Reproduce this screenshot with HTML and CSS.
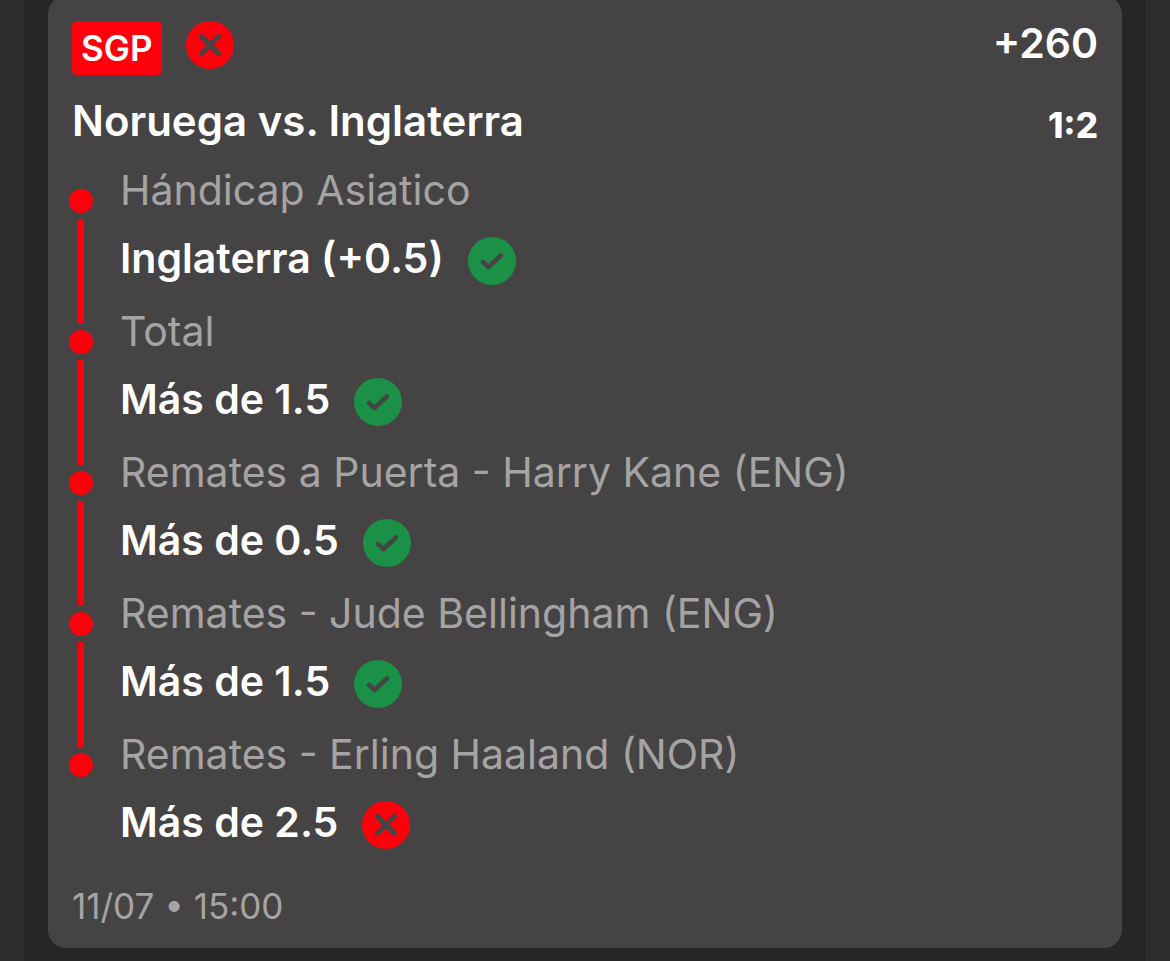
FILE: index.html
```
<!DOCTYPE html>
<html lang="es">
<head>
    <meta charset="UTF-8">
    <meta name="viewport" content="width=device-width, initial-scale=1.0">
    <title>Noruega vs. Inglaterra</title>
    <link rel="stylesheet" href="styles.css">
</head>
<body>
    <svg class="sprite" aria-hidden="true">
        <symbol id="icon-won" viewBox="0 0 48 48">
            <circle cx="24" cy="24" r="24" fill="#1a9147"/>
            <path d="M15 25l5.500 5L33 18.500" fill="none" stroke="#454344" stroke-width="4.500" stroke-linecap="round" stroke-linejoin="round"/>
        </symbol>
        <symbol id="icon-lost" viewBox="0 0 48 48">
            <circle cx="24" cy="24" r="24" fill="#fe000b"/>
            <path d="M15.500 15.500l17 17M32.500 15.500l-17 17" fill="none" stroke="#454344" stroke-width="5" stroke-linecap="round"/>
        </symbol>
    </svg>

    <main class="panel">
        <article class="bet-card">
            <header class="bet-header">
                <span class="tag">SGP</span>
                <svg class="status"><use href="#icon-lost"/></svg>
                <span class="odds">+260</span>
            </header>

            <div class="match">
                <h1 class="teams">Noruega vs. Inglaterra</h1>
                <span class="score">1:2</span>
            </div>

            <ul class="legs">
                <li class="leg">
                    <div class="market">Hándicap Asiatico</div>
                    <div class="pick"><span>Inglaterra (+0.5)</span><svg class="status"><use href="#icon-won"/></svg></div>
                </li>
                <li class="leg">
                    <div class="market">Total</div>
                    <div class="pick"><span>Más de 1.5</span><svg class="status"><use href="#icon-won"/></svg></div>
                </li>
                <li class="leg">
                    <div class="market">Remates a Puerta - Harry Kane (ENG)</div>
                    <div class="pick"><span>Más de 0.5</span><svg class="status"><use href="#icon-won"/></svg></div>
                </li>
                <li class="leg">
                    <div class="market">Remates - Jude Bellingham (ENG)</div>
                    <div class="pick"><span>Más de 1.5</span><svg class="status"><use href="#icon-won"/></svg></div>
                </li>
                <li class="leg">
                    <div class="market">Remates - Erling Haaland (NOR)</div>
                    <div class="pick"><span>Más de 2.5</span><svg class="status"><use href="#icon-lost"/></svg></div>
                </li>
            </ul>

            <footer class="date">11/07 • 15:00</footer>
        </article>
    </main>
</body>
</html>
```
FILE: styles.css
```
* {
    box-sizing: border-box;
}
body {
    margin: 0;
    min-height: 100vh;
    display: flex;
    background: #2c2c2c;
    color: #fff;
    font-family: Inter, Roboto, sans-serif;
    font-size: 41px;
    overflow: hidden;
}
.sprite {
    display: none;
}
.panel {
    flex: 1;
    margin: 0 24px;
    padding: 0 24px;
    background: #262626;
}
.bet-card {
    margin-top: -4px;
    padding: 25px 24px 18px;
    border-radius: 18px;
    background: #454344;
}
.bet-header {
    display: flex;
    align-items: flex-start;
    gap: 24px;
}
.tag {
    padding: 0 9px;
    border-radius: 5px;
    background: #fe000b;
    font-size: 35px;
    font-weight: 600;
    line-height: 54px;
}
.status {
    flex: none;
    width: 48px;
    height: 48px;
}
.odds {
    margin-left: auto;
    font-weight: 600;
    line-height: 44px;
}
.match {
    display: flex;
    justify-content: space-between;
    align-items: flex-end;
    margin-top: 22px;
}
.teams {
    margin: 0;
    font-size: 42px;
    font-weight: 600;
    line-height: 48px;
}
.score {
    font-size: 35px;
    font-weight: 800;
    line-height: 40px;
}
.legs {
    margin: 21px 0 0;
    padding: 0;
    list-style: none;
}
.leg {
    position: relative;
    padding: 0 0 22px 48px;
}
.leg::before {
    content: "";
    position: absolute;
    left: -3px;
    top: 23px;
    width: 24px;
    height: 24px;
    border-radius: 50%;
    background: #fe000b;
}
/* connector down to the next dot */
.leg:not(:last-child)::after {
    content: "";
    position: absolute;
    left: 6px;
    top: 53px;
    width: 6px;
    height: 105px;
    background: #fe000b;
}
.market {
    color: #a5a3a4;
    line-height: 48px;
}
.pick {
    display: flex;
    align-items: flex-start;
    gap: 24px;
    margin-top: 23px;
    font-weight: 600;
    line-height: 42px;
}
.date {
    margin-top: 11px;
    color: #a5a3a4;
    font-size: 35px;
    line-height: 48px;
}
```
